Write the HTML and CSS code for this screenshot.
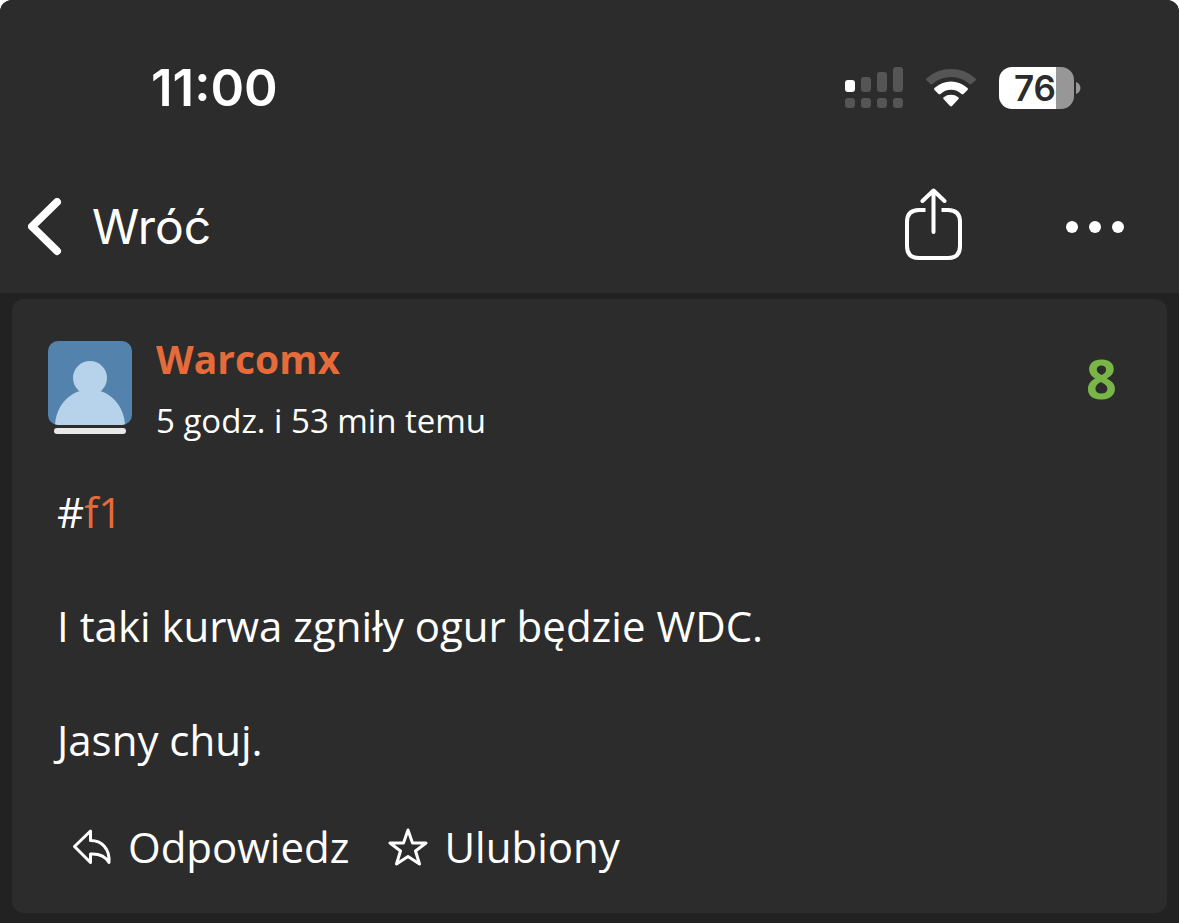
FILE: index.html
```html
<!DOCTYPE html>
<html lang="pl">
<head>
<meta charset="utf-8">
<meta name="viewport" content="width=device-width, initial-scale=1">
<title>Wpis</title>
<link rel="stylesheet" href="styles.css">
</head>
<body>
<div class="screen">
  <header class="top">
    <div class="status">
      <time class="clock">11:00</time>
      <div class="indicators">
        <svg class="signal" viewBox="0 0 58 42" aria-hidden="true">
          <rect class="lit" x="0" y="13" width="10" height="12" rx="3"/>
          <rect x="16" y="10" width="10" height="15" rx="3"/>
          <rect x="32" y="5" width="10" height="20" rx="3"/>
          <rect x="48" y="0" width="10" height="25" rx="3"/>
          <rect x="0" y="31" width="10" height="10" rx="3"/>
          <rect x="16" y="31" width="10" height="10" rx="3"/>
          <rect x="32" y="31" width="10" height="10" rx="3"/>
          <rect x="48" y="31" width="10" height="10" rx="3"/>
        </svg>
        <svg class="wifi" viewBox="0 0 52 40" aria-hidden="true">
          <path class="faint" d="M1.500 12.500Q0.500 11.500 1.500 10.500A36 36 0 0 1 50.500 10.500Q51.500 11.500 50.500 12.500L46.500 16Q45.500 16.700 44.500 16A28 28 0 0 0 7.500 16Q6.500 16.700 5.500 16Z"/>
          <path d="M9.500 22Q8.500 21 9.500 20A24 24 0 0 1 42.500 20Q43.500 21 42.500 22L38.500 26Q37.500 26.700 36.500 26A15 15 0 0 0 15.500 26Q14.500 26.700 13.500 26Z"/>
          <path d="M18.500 31Q17.700 30 18.700 29.200A12 12 0 0 1 33.300 29.200Q34.300 30 33.500 31L27 38Q26 38.800 25 38Z"/>
        </svg>
        <div class="battery"><span class="level">76</span><svg class="cap" viewBox="0 0 5 14" aria-hidden="true"><path d="M0 1C6 3 6 11 0 13Z"/></svg></div>
      </div>
    </div>
    <nav class="bar">
      <a class="back" href="#">
        <svg class="chevron" viewBox="0 0 34 58" aria-hidden="true"><path d="M29 4L4 28.500L29 53"/></svg>
        <span>Wróć</span>
      </a>
      <div class="tools">
        <button class="tool" type="button" aria-label="Udostępnij">
          <svg class="share" viewBox="0 0 58 78" aria-hidden="true"><path d="M20.500 22H14Q2 22 2 34V58Q2 70 14 70H43Q55 70 55 58V34Q55 22 43 22H36.500"/><path d="M28.500 44V3M17.500 13L28.500 2.500L39.500 13"/></svg>
        </button>
        <button class="tool" type="button" aria-label="Więcej">
          <svg class="dots" viewBox="0 0 60 14" aria-hidden="true"><circle cx="7" cy="7" r="6"/><circle cx="30" cy="7" r="6"/><circle cx="53" cy="7" r="6"/></svg>
        </button>
      </div>
    </nav>
  </header>
  <main class="feed">
    <article class="card">
      <div class="author">
        <div class="portrait">
          <svg class="avatar" viewBox="0 0 84 84" role="img" aria-label="Warcomx"><rect width="84" height="84" fill="#5382ac"/><circle cx="42" cy="37" r="17" fill="#b7d3eb"/><path d="M7 84C8 66 19 54 32 50H52C65 54 76 66 77 84Z" fill="#b7d3eb"/></svg>
          <span class="mark"></span>
        </div>
        <div class="who">
          <a class="name" href="#">Warcomx</a>
          <time class="age">5 godz. i 53 min temu</time>
        </div>
        <span class="score">8</span>
      </div>
      <div class="text">
        <p>#<a href="#">f1</a></p>
        <p>I taki kurwa zgniły ogur będzie WDC.</p>
        <p>Jasny chuj.</p>
      </div>
      <div class="actions">
        <button class="action" type="button">
          <svg class="glyph" viewBox="0 0 40 40" aria-hidden="true"><path d="M18.500 4L2.500 19.500L18.500 35.500V27C27 26.500 33 28.500 37 35.500C38 22 30 13.500 18.500 13.500Z"/></svg>
          Odpowiedz
        </button>
        <button class="action" type="button">
          <svg class="glyph" viewBox="0 0 40 40" aria-hidden="true"><path d="M20 3L24.500 16H38L27.500 24L31.500 37L20 29.500L8.500 37L12.500 24L2 16H15.500Z"/></svg>
          Ulubiony
        </button>
      </div>
    </article>
  </main>
</div>
</body>
</html>
```
FILE: styles.css
```css
* { box-sizing: border-box; }
body { margin: 0; background: #fff; color: #fff; font-family: "Open Sans", sans-serif; }
p { margin: 0; }
a { color: inherit; text-decoration: none; }
button { border: 0; padding: 0; background: none; color: inherit; font: inherit; }
svg { display: block; flex: none; }
.screen { min-height: 100vh; background: #222; border-radius: 12px 12px 0 0; overflow: hidden; }
.top { background: #2c2c2c; font-family: Inter, sans-serif; }
.status { display: flex; align-items: center; justify-content: space-between; padding: 58px 98px 0 151px; }
.clock { font-size: 51px; line-height: 60px; font-weight: 600; }
.indicators { display: flex; align-items: center; gap: 22px; }
.signal { width: 58px; height: 42px; fill: #555; }
.signal .lit { fill: #fff; }
.wifi { width: 52px; height: 40px; fill: #fff; }
.wifi .faint { fill: #555; }
.battery { display: flex; align-items: center; gap: 2px; }
.level { width: 75px; height: 42px; padding-left: 15px; border-radius: 13px; background: linear-gradient(90deg, #fff 76%, #979797 76%); color: #2c2c2c; font-size: 35px; line-height: 42px; font-weight: 600; }
.cap { width: 5px; height: 14px; fill: #979797; }
.bar { display: flex; align-items: center; justify-content: space-between; padding: 70px 54px 27px 28px; }
.back { display: flex; align-items: center; gap: 30px; font-size: 48px; line-height: 60px; }
.chevron { width: 34px; height: 58px; fill: none; stroke: #fff; stroke-width: 8px; stroke-linecap: round; stroke-linejoin: round; }
.tools { display: flex; align-items: center; gap: 102px; }
.share { width: 58px; height: 78px; fill: none; stroke: #fff; stroke-width: 4px; stroke-linecap: round; stroke-linejoin: round; }
.share path:first-child { stroke-linecap: butt; }
.dots { width: 60px; height: 14px; fill: #fff; }
.feed { padding: 6px 12px 10px; }
.card { padding: 36px 50px 38px 36px; border-radius: 12px; background: #2c2c2c; }
.author { display: flex; align-items: flex-start; gap: 24px; }
.portrait { display: flex; flex-direction: column; align-items: center; gap: 3px; padding-top: 6px; }
.avatar { width: 84px; height: 84px; border-radius: 10px; }
.mark { width: 72px; height: 6px; border-radius: 3px; background: #e8e8e8; }
.who { display: flex; flex: 1; flex-direction: column; gap: 14px; }
.name { align-self: flex-start; color: #e56b3b; font-size: 39px; line-height: 48px; font-weight: 700; }
.age { font-size: 33px; line-height: 48px; }
.score { padding-top: 8px; color: #79b547; font-size: 54px; line-height: 70px; font-weight: 700; }
.text { display: flex; flex-direction: column; gap: 57px; padding: 38px 9px 0; font-size: 42px; line-height: 57px; }
.text a { color: #e56b3b; }
.actions { display: flex; flex-wrap: wrap; gap: 39px; padding: 50px 24px 0; font-size: 42px; line-height: 57px; }
.action { display: flex; align-items: center; gap: 16px; }
.glyph { width: 40px; height: 40px; fill: none; stroke: #fff; stroke-width: 3px; stroke-linejoin: round; }
```
